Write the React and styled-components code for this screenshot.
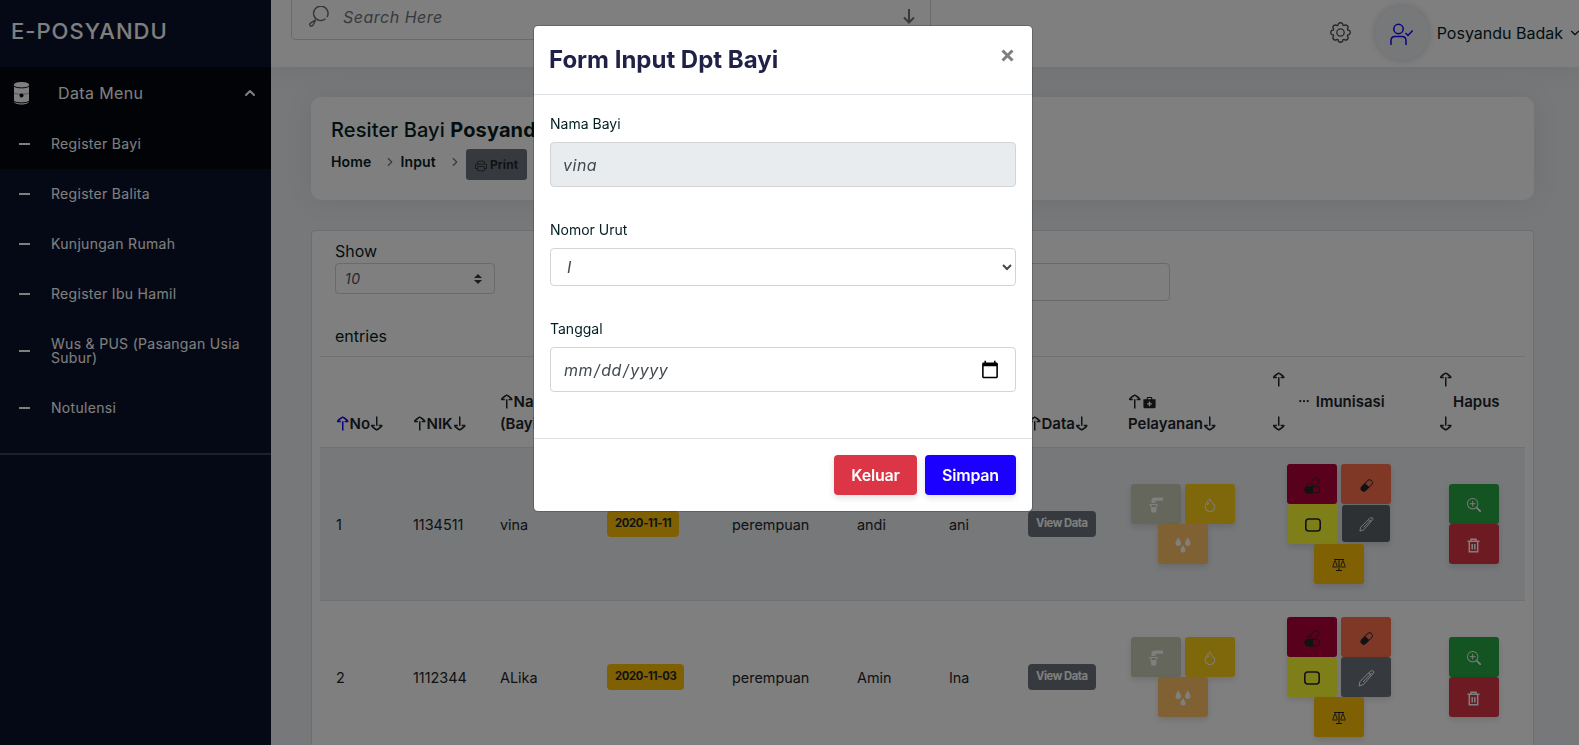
import styled, { createGlobalStyle } from "styled-components";
import { BsCapsule, BsDroplet, BsPrinter, BsThreeDots, BsZoomIn } from "react-icons/bs";
import { IoMdMedkit } from "react-icons/io";
import { FiChevronDown, FiChevronRight, FiChevronUp } from "react-icons/fi";

const GlobalStyle = createGlobalStyle`
  * {
    box-sizing: border-box;
  }
  body {
    margin: 0;
    overflow: hidden;
    color: #031e23;
    font-family: Inter, "Liberation Sans", sans-serif;
    font-size: 16px;
    line-height: 1.5;
    background-color: #ecf0f4;
  }
  input, select, button {
    font-family: inherit;
  }
  svg {
    flex-shrink: 0;
  }
`;

const Layout = styled.div`
  display: flex;
  height: 745px;
  overflow: hidden;
`;

/* sidebar */
const Sidebar = styled.aside`
  flex: 0 0 271px;
  color: #fff;
  background-color: #0b132b;
`;

const Brand = styled.div`
  height: 67px;
  padding: 0 11px;
  font-size: 22px;
  font-weight: 500;
  line-height: 63px;
  letter-spacing: 1px;
`;

const MenuToggle = styled.div`
  display: flex;
  align-items: center;
  height: 52px;
  padding: 0 13px;
  font-size: 16px;
  letter-spacing: 0.38px;
  background-color: #04070f;
  .label {
    flex: 1;
    margin-left: 28px;
  }
`;

const MenuItem = styled.a`
  display: flex;
  align-items: center;
  min-height: 50px;
  padding: 18px 20px 18px 19px;
  font-size: 14px;
  line-height: 14px;
  letter-spacing: 0.3px;
  background-color: ${({ $active }) => ($active ? "#04070f" : "transparent")};
  &::before {
    content: "";
    flex: 0 0 11px;
    height: 2px;
    margin-right: 21px;
    background-color: #fff;
  }
`;

const Divider = styled.div`
  height: 2px;
  margin-top: 20px;
  background-color: #3a4156;
`;

/* main */
const Main = styled.div`
  flex: 1;
  min-width: 0;
`;

const Header = styled.header`
  display: flex;
  justify-content: space-between;
  height: 67px;
  padding-left: 20px;
  background-color: #fff;
  box-shadow: 0 0 28px rgba(0, 0, 0, 0.08);
`;

const SearchBox = styled.div`
  display: flex;
  align-items: center;
  width: 640px;
  height: 45px;
  margin-top: -5px;
  padding: 0 15px 2px 16px;
  border: 1px solid #d4d4d4;
  border-radius: 4px;
  color: #6c757d;
  .placeholder {
    flex: 1;
    margin-left: 14px;
    font-style: italic;
    letter-spacing: 0.5px;
  }
`;

const UserArea = styled.div`
  display: flex;
  align-items: center;
  margin-right: -3px;
  padding-bottom: 2px;
  white-space: nowrap;
  .name {
    margin: 0 5px 0 8px;
  }
`;

const Avatar = styled.div`
  display: flex;
  align-items: center;
  justify-content: center;
  width: 54px;
  height: 54px;
  margin-left: 24px;
  padding-top: 3px;
  border-radius: 50%;
  color: #1b00ff;
  background-color: #ecf0f4;
  box-shadow: 0 0 8px rgba(0, 0, 0, 0.18);
`;

const Content = styled.main`
  padding: 30px 45px 0 40px;
`;

const TitleCard = styled.section`
  height: 103px;
  margin-bottom: 30px;
  padding: 18px 20px;
  border-radius: 10px;
  background-color: #fff;
  box-shadow: 0 0 28px rgba(0, 0, 0, 0.08);
  h4 {
    margin: 0;
    font-size: 20px;
    font-weight: 500;
    line-height: 30px;
    letter-spacing: 0.12px;
  }
  b {
    font-weight: 700;
  }
`;

const Breadcrumb = styled.div`
  display: flex;
  margin-top: 4px;
  font-size: 14px;
  font-weight: 600;
  line-height: 26px;
  letter-spacing: 0.15px;
  svg {
    margin-top: 6px;
    color: #6c757d;
  }
  .home {
    margin-right: 12px;
  }
  .input {
    margin: 0 12px 0 3px;
  }
`;

const PrintButton = styled.button`
  display: flex;
  align-items: center;
  height: 31px;
  margin-left: 4px;
  padding: 0 9px;
  border: 0;
  border-radius: 3px;
  color: #212529;
  font-size: 12px;
  font-weight: 700;
  letter-spacing: 0.1px;
  background-color: #6c757d;
  svg {
    margin: 2px 3px 0 0;
    color: #212529;
  }
`;

const TableCard = styled.section`
  height: 560px;
  padding: 8px;
  border: 1px solid #d9dce0;
  border-radius: 4px 4px 0 0;
  background-color: #fff;
`;

const Filters = styled.div`
  display: flex;
  justify-content: space-between;
  height: 117px;
  padding: 0 355px 0 15px;
`;

const LengthSelect = styled.div`
  display: flex;
  align-items: center;
  justify-content: space-between;
  width: 160px;
  height: 31px;
  margin-bottom: 30px;
  padding: 0 12px 0 9px;
  border: 1px solid #d4d4d4;
  border-radius: 4px;
  color: #495057;
  font-size: 14px;
  font-style: italic;
  letter-spacing: 0.5px;
`;

const FilterInput = styled.input`
  width: 240px;
  height: 38px;
  margin-top: 24px;
  border: 1px solid #ced4da;
  border-radius: 4px;
`;

const Table = styled.table`
  width: 1205px;
  table-layout: fixed;
  border-collapse: collapse;
  font-size: 15px;
`;

const Th = styled.th`
  height: 91px;
  padding: 12px 0 12px 16px;
  border-top: 1px solid #dee2e6;
  text-align: left;
  vertical-align: bottom;
  font-weight: 600;
  line-height: 22px;
  white-space: nowrap;
  color: #212529;
`;

const Indented = styled.div`
  padding-left: ${({ $indent }) => $indent}px;
  svg {
    margin-right: 2px;
  }
`;

const MedkitIcon = styled(IoMdMedkit)`
  vertical-align: -3px;
`;

const Row = styled.tr`
  height: 153px;
  border-top: 1px solid #dee2e6;
  background-color: ${({ $striped }) => ($striped ? "#ecf0f4" : "#fff")};
`;

const Td = styled.td`
  padding: 2px 0 0 16px;
  color: #212529;
  vertical-align: middle;
  font-size: 14.4px;
`;

const ActionTd = styled(Td)`
  padding: 0 ${({ $shift }) => $shift || 1}px 0 0;
`;

const Badge = styled.span`
  display: inline-block;
  height: 26px;
  margin-bottom: 2px;
  padding: 0 8px;
  border-radius: 4px;
  font-size: 11.25px;
  font-weight: 700;
  line-height: 24px;
  letter-spacing: ${({ $dark }) => ($dark ? "-0.45px" : "-0.3px")};
  vertical-align: middle;
  color: ${({ $dark }) => ($dark ? "#fff" : "#212529")};
  background-color: ${({ $dark }) => ($dark ? "#6c757d" : "#ffc107")};
`;

const ActionGroup = styled.div`
  display: flex;
  flex-wrap: wrap;
  justify-content: center;
  column-gap: 4px;
  width: ${({ $narrow }) => ($narrow ? 50 : 104)}px;
  margin: 0 auto;
`;

const ActionButton = styled.button`
  display: flex;
  align-items: center;
  justify-content: center;
  width: ${({ $small }) => ($small ? 48 : 50)}px;
  height: ${({ $small }) => ($small ? 37 : 40)}px;
  margin-top: ${({ $small }) => ($small ? 1 : 0)}px;
  padding: 2px 0 0;
  border: 0;
  border-radius: 3px;
  color: ${({ $dark }) => ($dark ? "#212529" : "#fff")};
  background-color: ${({ $bg }) => $bg};
  box-shadow: 0 3px 6px rgba(0, 0, 0, 0.12);
`;

/* modal */
const Backdrop = styled.div`
  position: fixed;
  inset: 0;
  display: flex;
  align-items: flex-start;
  justify-content: center;
  padding: 25px 13px 0 0;
  background-color: rgba(0, 0, 0, 0.5);
`;

const Dialog = styled.div`
  width: 500px;
  border: 1px solid rgba(0, 0, 0, 0.2);
  border-radius: 5px;
  background-color: #fff;
  background-clip: padding-box;
`;

const DialogHeader = styled.div`
  display: flex;
  justify-content: space-between;
  height: 69px;
  padding: 16px 18px 16px 15px;
  border-bottom: 1px solid #dee2e6;
  h4 {
    margin: 0;
    color: #1f2146;
    font-size: 24px;
    font-weight: 700;
    line-height: 35px;
    letter-spacing: 0;
  }
`;

const DialogBody = styled.div`
  padding: 16px;
`;

const Field = styled.div`
  margin-bottom: 30px;
  label {
    display: block;
    height: 31px;
    font-size: 14px;
    line-height: 26px;
  }
  input,
  select {
    display: block;
    width: 100%;
    height: 45px;
    padding: 0 12px;
    border: 1px solid #d4d4d4;
    border-radius: 4px;
    color: #40494d;
    font-size: 16px;
    font-style: italic;
    letter-spacing: 0.5px;
    background-color: #fff;
  }
  input::-webkit-calendar-picker-indicator {
    width: 20px;
    height: 20px;
    margin-right: 1px;
  }
  select {
    height: 38px;
  }
  input:disabled {
    background-color: #e9ecef;
  }
`;

const DialogFooter = styled.div`
  display: flex;
  justify-content: flex-end;
  gap: 8px;
  height: 73px;
  padding: 16px;
  border-top: 1px solid #dee2e6;
`;

const Button = styled.button`
  width: ${({ $width }) => $width}px;
  height: 40px;
  padding: 0;
  border: 0;
  border-radius: 4px;
  color: #fff;
  font-size: 16px;
  font-weight: 600;
  letter-spacing: -0.2px;
  background-color: ${({ $bg }) => $bg};
  box-shadow: 0 3px 6px rgba(0, 0, 0, 0.12);
`;

const CloseIcon = styled.svg`
  margin-top: 7px;
`;

const ArrowSvg = styled.svg`
  display: inline-block;
  vertical-align: -2px;
  transform: ${({ $down }) => ($down ? "rotate(180deg)" : "none")};
  color: ${({ $active }) => ($active ? "#1b00ff" : "inherit")};
`;

const SortArrow = ({ down, active }) => (
  <ArrowSvg $down={down} $active={active} width="13.500" height="15" viewBox="0 0 13 15">
    <path
      d="M6.500 14.500V5.200M4.600 5.600H1.400C1.600 3.800 4.200 2.600 6.500 1c2.300 1.600 4.900 2.800 5.100 4.600H8.400"
      fill="none"
      stroke="currentColor"
      strokeWidth="1.500"
      strokeLinejoin="round"
    />
  </ArrowSvg>
);

const BarrelIcon = () => (
  <svg width="17" height="24" viewBox="0 0 17 24">
    <path d="M1 3.500C1 0 16 0 16 3.500v17c0 4-15 4-15 0z" fill="#fff" />
    <path
      d="M1 5c1 2.500 14 2.500 15 0M1 20c1 2.500 14 2.500 15 0"
      fill="none"
      stroke="#04070f"
    />
    <path d="M1 12c1 1.500 14 1.500 15 0" fill="none" stroke="#8a8c92" strokeWidth=".8" />
    <circle cx="8.500" cy="14.500" r="2" fill="#04070f" />
  </svg>
);

const SearchIcon = () => (
  <svg width="21" height="22" viewBox="0 0 21 22" fill="none" stroke="currentColor" strokeWidth="1.500">
    <path d="M17.500 12.800A7.200 7.200 0 1 1 19 11" />
    <path d="M7.600 14 4.200 16c-2 1-3.200 2.300-2.200 3.500 1 1.200 2.800.5 3.600-1.500l2-3.500" />
  </svg>
);

// eight rounded lobes around the hub
const gearPath = Array.from({ length: 8 }, (_, i) => {
  const at = (deg, r) => {
    const a = ((i * 45 + deg) * Math.PI) / 180;
    return `${(10.5 + r * Math.cos(a)).toFixed(2)} ${(10.5 + r * Math.sin(a)).toFixed(2)}`;
  };
  return `${i ? "L" : "M"}${at(-17, 7.7)}L${at(-14, 9)}Q${at(0, 10.8)} ${at(14, 9)}L${at(17, 7.7)}`;
}).join("");

const GearIcon = () => (
  <svg width="21" height="21" viewBox="0 0 21 21" fill="none" stroke="#495057" strokeWidth="1.300" strokeLinejoin="round">
    <path d={`${gearPath}Z`} />
    <circle cx="10.500" cy="10.500" r="3.700" />
  </svg>
);

const UserCheckIcon = () => (
  <svg width="23" height="23" viewBox="0 0 23 23" fill="none" stroke="currentColor" strokeWidth="1.500">
    <circle cx="8.500" cy="6" r="4.700" />
    <path d="M1 22v-4c0-3 1.500-4.500 4-4.500h7c2.500 0 4 1.500 4 4.500v4M15.500 10l2.500 2.500 4.700-5" />
  </svg>
);

const TapIcon = () => (
  <svg width="14" height="16" viewBox="0 0 14 16" fill="currentColor">
    <path d="M2.500 6V3.500C2.500 1.500 3.700.5 5.500.5H14v3.300H6.500V6zM.5 7h8v2H7.700L7 15.500H2.500L1.500 9H.5z" />
    <path d="M2.500 9h4.300" stroke="#8f907f" />
  </svg>
);

const DropsIcon = () => (
  <svg width="16" height="16" viewBox="0 0 16 16" fill="currentColor">
    <path d="M3.200 0C4 2.500 6 4 6 6.200a2.700 2.700 0 0 1-5.500 0C.5 4 2.500 2.500 3.200 0zM12.800 0c.8 2.500 2.700 4 2.700 6.200a2.700 2.700 0 0 1-5.500 0C10 4 12 2.500 12.800 0zM8 8c.7 2 2.500 3 2.500 5a2.500 2.500 0 0 1-5 0C5.500 11 7.300 10 8 8z" />
  </svg>
);

const PillsIcon = () => (
  <svg width="17" height="17" viewBox="0 0 17 17" fill="none" stroke="currentColor">
    <rect x="1" y="9.500" width="15" height="6.500" rx="3.250" />
    <path d="M8.500 9.500V16H4.200a3.200 3.200 0 0 1 0-6.500z" fill="currentColor" />
    <path d="m2.500 8 7.700-6.300c2.800-2 6.300 1.300 3.700 4L10.800 8.500M5.500 5.800l4 2.700" />
  </svg>
);

const TabletIcon = () => (
  <svg width="16" height="14" viewBox="0 0 16 14" fill="none" stroke="currentColor" strokeWidth="1.600">
    <rect x=".8" y="1" width="14.400" height="12" rx="3" />
  </svg>
);

const PenIcon = ({ size }) => (
  <svg width={size} height={size} viewBox="0 0 17 17" fill="none" stroke="currentColor">
    <path d="m1 16 1-4.500L12 1.500c1-1 4.800-1.300 3.500 1.500L5.500 14.500 1 16zM5 12 13.500 3M10.500 3l2.500 2" />
  </svg>
);

const ScaleIcon = () => (
  <svg width="14" height="14" viewBox="0 0 14 14" fill="none" stroke="currentColor">
    <path d="M2 1.500h10M7 1.500v11M4 12.500h6" />
    <path d="M3 2.500.8 8.500M3.300 2.500l2 6M10.700 2.500l-2 6M11 2.500l2.200 6M.5 9h5M8.500 9h5" strokeWidth=".9" />
  </svg>
);

const TrashIcon = () => (
  <svg width="13" height="15" viewBox="0 0 13 15" fill="none" stroke="currentColor" strokeWidth="1.500">
    <path d="M.5 3.300h12M4 3V1.200h5V3M2.300 3.500v10.200h8.400V3.500M5.200 6v5.500M7.800 6v5.500" />
  </svg>
);

const columns = [77, 87, 107, 125, 125, 92, 79, 100, 144, 167, 102];

const subMenus = [
  "Register Bayi",
  "Register Balita",
  "Kunjungan Rumah",
  "Register Ibu Hamil",
  "Wus & PUS (Pasangan Usia Subur)",
  "Notulensi",
];

const babies = [
  { no: 1, nik: "1134511", name: "vina", date: "2020-11-11", gender: "perempuan", father: "andi", mother: "ani" },
  { no: 2, nik: "1112344", name: "ALika", date: "2020-11-03", gender: "perempuan", father: "Amin", mother: "Ina" },
];

const BabyRow = ({ baby, striped }) => (
  <Row $striped={striped}>
    <Td>{baby.no}</Td>
    <Td>{baby.nik}</Td>
    <Td>{baby.name}</Td>
    <Td>
      <Badge>{baby.date}</Badge>
    </Td>
    <Td>{baby.gender}</Td>
    <Td>{baby.father}</Td>
    <Td>{baby.mother}</Td>
    <Td>
      <Badge $dark>View Data</Badge>
    </Td>
    <ActionTd $shift={3}>
      <ActionGroup>
        <ActionButton $bg="#cdceb8"><TapIcon /></ActionButton>
        <ActionButton $bg="#ffd119"><BsDroplet size={14} /></ActionButton>
        <ActionButton $bg="#ffc266"><DropsIcon /></ActionButton>
      </ActionGroup>
    </ActionTd>
    <ActionTd>
      <ActionGroup>
        <ActionButton $dark $bg="#b3003b"><PillsIcon /></ActionButton>
        <ActionButton $dark $bg="#ff704d"><BsCapsule size={13} /></ActionButton>
        <ActionButton $dark $bg="#ffff33"><TabletIcon /></ActionButton>
        <ActionButton $small={striped} $bg={striped ? "#5a6268" : "#6c757d"}>
          <PenIcon size={striped ? 15 : 17} />
        </ActionButton>
        <ActionButton $dark $bg="#ffc107"><ScaleIcon /></ActionButton>
      </ActionGroup>
    </ActionTd>
    <ActionTd>
      <ActionGroup $narrow>
        <ActionButton $bg="#28a745"><BsZoomIn size={14} /></ActionButton>
        <ActionButton $bg="#dc3545"><TrashIcon /></ActionButton>
      </ActionGroup>
    </ActionTd>
  </Row>
);

export default function App() {
  return (
    <>
      <GlobalStyle />
      <Layout>
        <Sidebar>
          <Brand>E-POSYANDU</Brand>
          <MenuToggle>
            <BarrelIcon />
            <span className="label">Data Menu</span>
            <FiChevronUp size={16} strokeWidth={3} />
          </MenuToggle>
          {subMenus.map((menu, i) => (
            <MenuItem key={menu} $active={i === 0}>
              {menu}
            </MenuItem>
          ))}
          <Divider />
        </Sidebar>

        <Main>
          <Header>
            <SearchBox>
              <SearchIcon />
              <span className="placeholder">Search Here</span>
              <svg width="12" height="15" viewBox="0 0 12 15" fill="none" stroke="currentColor" strokeWidth="2">
                <path d="M6 0v13M1 8.500l5 5 5-5" />
              </svg>
            </SearchBox>
            <UserArea>
              <GearIcon />
              <Avatar>
                <UserCheckIcon />
              </Avatar>
              <span className="name">Posyandu Badak</span>
              <FiChevronDown size={14} />
            </UserArea>
          </Header>

          <Content>
            <TitleCard>
              <h4>
                Resiter Bayi <b>Posyandu</b>
              </h4>
              <Breadcrumb>
                <span className="home">Home</span>
                <FiChevronRight size={14} />
                <span className="input">Input</span>
                <FiChevronRight size={14} />
                <PrintButton>
                  <BsPrinter size={12} />
                  Print
                </PrintButton>
              </Breadcrumb>
            </TitleCard>

            <TableCard>
              <Filters>
                <div>
                  Show
                  <LengthSelect>
                    10
                    <svg width="8" height="10" viewBox="0 0 8 10" fill="#343a40">
                      <path d="M4 0 0 4h8zM4 10 0 6h8z" />
                    </svg>
                  </LengthSelect>
                  entries
                </div>
                <FilterInput />
              </Filters>
              <Table>
                <colgroup>
                  {columns.map((width, i) => (
                    <col key={i} width={width} />
                  ))}
                </colgroup>
                <thead>
                  <tr>
                    <Th><SortArrow active />No<SortArrow down /></Th>
                    <Th><SortArrow />NIK<SortArrow down /></Th>
                    <Th><SortArrow />Nama<br />(Bayi)</Th>
                    <Th />
                    <Th />
                    <Th />
                    <Th />
                    <Th><SortArrow />Data<SortArrow down /></Th>
                    <Th>
                      <SortArrow />
                      <MedkitIcon size={15} />
                      <br />
                      Pelayanan<SortArrow down />
                    </Th>
                    <Th>
                      <SortArrow />
                      <Indented $indent={26}>
                        <BsThreeDots size={12} /> Imunisasi
                      </Indented>
                      <SortArrow down />
                    </Th>
                    <Th>
                      <SortArrow />
                      <Indented $indent={14}>Hapus</Indented>
                      <SortArrow down />
                    </Th>
                  </tr>
                </thead>
                <tbody>
                  {babies.map((baby, i) => (
                    <BabyRow key={baby.no} baby={baby} striped={i % 2 === 0} />
                  ))}
                </tbody>
              </Table>
            </TableCard>
          </Content>
        </Main>
      </Layout>

      <Backdrop>
        <Dialog>
          <DialogHeader>
            <h4>Form Input Dpt Bayi</h4>
            <CloseIcon width="13" height="13" viewBox="0 0 13 13" stroke="#7f7f7f" strokeWidth="3">
              <path d="m1.500 1.500 10 10M11.500 1.500l-10 10" />
            </CloseIcon>
          </DialogHeader>
          <DialogBody>
            <Field>
              <label>Nama Bayi</label>
              <input disabled defaultValue="vina" />
            </Field>
            <Field>
              <label>Nomor Urut</label>
              <select>
                <option>I</option>
              </select>
            </Field>
            <Field>
              <label>Tanggal</label>
              <input type="date" />
            </Field>
          </DialogBody>
          <DialogFooter>
            <Button $bg="#dc3545" $width={83}>Keluar</Button>
            <Button $bg="#1b00ff" $width={91}>Simpan</Button>
          </DialogFooter>
        </Dialog>
      </Backdrop>
    </>
  );
}
